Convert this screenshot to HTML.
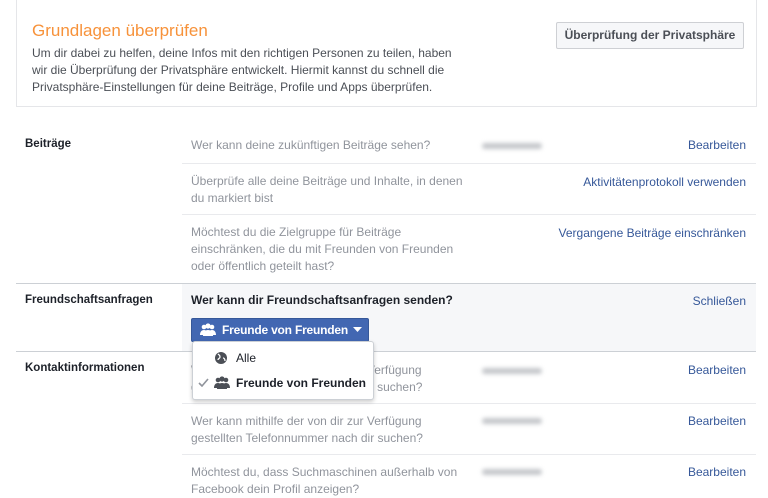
<!DOCTYPE html>
<html><head><meta charset="utf-8"><style>
*{margin:0;padding:0;box-sizing:border-box}
body{width:768px;height:493px;overflow:hidden;background:#fff;font-family:"Liberation Sans",Arial,sans-serif;font-size:12px;color:#1d2129;position:relative}
.a{position:absolute}
.box{left:16px;top:-2px;width:741px;height:109px;border:1px solid #e5e6e9;border-top:none}
.g{color:#90949c;line-height:17px}
.lk{color:#365899;right:22px;text-align:right}
.lbl{left:25px;font-weight:bold;font-size:11.5px}
.hl{height:1px;background:#e9eaed;left:182px;width:574px}
.sl{height:1px;background:#ccd0d5;left:16px;width:740px}
.blur{width:60px;height:6px;background:#c4c6ca;border-radius:3px;filter:blur(2px);left:482px}
</style></head><body>
<div class="a box"></div>
<div class="a" style="left:32px;top:21px;font-size:17px;color:#f7923a">Grundlagen überprüfen</div>
<div class="a" style="left:32px;top:45px;line-height:17px;color:#4b4f56;font-size:12px;width:420px">Um dir dabei zu helfen, deine Infos mit den richtigen Personen zu teilen, haben wir die Überprüfung der Privatsphäre entwickelt. Hiermit kannst du schnell die Privatsphäre-Einstellungen für deine Beiträge, Profile und Apps überprüfen.</div>
<div class="a" style="left:556px;top:22px;width:188px;height:27px;border:1px solid #ced0d4;border-radius:2px;background:#f6f7f9;font-weight:bold;color:#4b4f56;text-align:center;line-height:25px">Überprüfung der Privatsphäre</div>

<div class="a lbl" style="top:138px">Beiträge</div>
<div class="a g" style="left:191px;top:137px">Wer kann deine zukünftigen Beiträge sehen?</div>
<div class="a blur" style="top:143px"></div>
<div class="a lk" style="top:138px">Bearbeiten</div>
<div class="a hl" style="top:163px"></div>
<div class="a g" style="left:191px;top:173px;width:280px">Überprüfe alle deine Beiträge und Inhalte, in denen du markiert bist</div>
<div class="a lk" style="top:175px">Aktivitätenprotokoll verwenden</div>
<div class="a hl" style="top:214px"></div>
<div class="a g" style="left:191px;top:224px;width:270px">Möchtest du die Zielgruppe für Beiträge einschränken, die du mit Freunden von Freunden oder öffentlich geteilt hast?</div>
<div class="a lk" style="top:226px">Vergangene Beiträge einschränken</div>

<div class="a" style="left:182px;top:283px;width:574px;height:68px;background:#f6f7f9"></div>
<div class="a sl" style="top:283px"></div>
<div class="a lbl" style="top:294px">Freundschaftsanfragen</div>
<div class="a" style="left:191px;top:293px;font-weight:bold;font-size:12px">Wer kann dir Freundschaftsanfragen senden?</div>
<div class="a lk" style="top:294px">Schließen</div>
<div class="a" style="left:191px;top:318px;width:178px;height:24px;background:#4267b2;border:1px solid #365899;border-radius:2px;color:#fff;font-weight:bold;line-height:22px;padding-left:30px;letter-spacing:-0.2px">Freunde von Freunden</div>
<svg class="a" style="left:200px;top:323px" width="16" height="13" viewBox="0 0 16 13" fill="#fff"><circle cx="4" cy="4" r="2.3"/><circle cx="12" cy="4" r="2.3"/><circle cx="8" cy="3" r="2.6"/><path d="M0 12c0-3 1.5-5 4-5s4 2 4 5z M8 12c0-3 1.5-5 4-5s4 2 4 5z"/><path d="M3 13c0-4 2-6 5-6s5 2 5 6z"/></svg>
<svg class="a" style="left:353px;top:327px" width="9" height="6"><path d="M0 0h9L4.5 5z" fill="#fff"/></svg>
<div class="a sl" style="top:351px"></div>

<div class="a lbl" style="top:362px">Kontaktinformationen</div>
<div class="a g" style="left:191px;top:362px;width:280px">Wer kann mithilfe der von dir zur Verfügung gestellten E-Mail-Adresse nach dir suchen?</div>
<div class="a blur" style="top:368px"></div>
<div class="a lk" style="top:363px">Bearbeiten</div>
<div class="a hl" style="top:403px"></div>
<div class="a g" style="left:191px;top:413px;width:280px">Wer kann mithilfe der von dir zur Verfügung gestellten Telefonnummer nach dir suchen?</div>
<div class="a blur" style="top:418px"></div>
<div class="a lk" style="top:414px">Bearbeiten</div>
<div class="a hl" style="top:454px"></div>
<div class="a g" style="left:191px;top:464px;width:290px">Möchtest du, dass Suchmaschinen außerhalb von Facebook dein Profil anzeigen?</div>
<div class="a blur" style="top:469px"></div>
<div class="a lk" style="top:465px">Bearbeiten</div>

<div class="a" style="left:192px;top:341px;width:182px;height:59px;background:#fff;border:1px solid #ccd0d5;border-radius:3px;box-shadow:0 2px 4px rgba(0,0,0,.2)"></div>
<svg class="a" style="left:215px;top:352px" width="12" height="12" viewBox="0 0 12 12"><circle cx="6" cy="6" r="6" fill="#4b4f56"/><path d="M3 2c1 1 2 1 2 3s-2 1-2 3M8 6c1 0 2 1 2 3" stroke="#fff" stroke-width="1.3" fill="none"/></svg>
<div class="a" style="left:236px;top:351px;font-size:12px">Alle</div>
<svg class="a" style="left:198px;top:378px" width="11" height="9"><path d="M1 5l3 3 6-7" stroke="#90949c" stroke-width="1.6" fill="none"/></svg>
<svg class="a" style="left:214px;top:376px" width="16" height="13" viewBox="0 0 16 13" fill="#4b4f56"><circle cx="4" cy="4" r="2.3"/><circle cx="12" cy="4" r="2.3"/><circle cx="8" cy="3" r="2.6"/><path d="M0 12c0-3 1.5-5 4-5s4 2 4 5z M8 12c0-3 1.5-5 4-5s4 2 4 5z"/><path d="M3 13c0-4 2-6 5-6s5 2 5 6z"/></svg>
<div class="a" style="left:236px;top:376px;font-weight:bold;font-size:12px">Freunde von Freunden</div>
</body></html>
